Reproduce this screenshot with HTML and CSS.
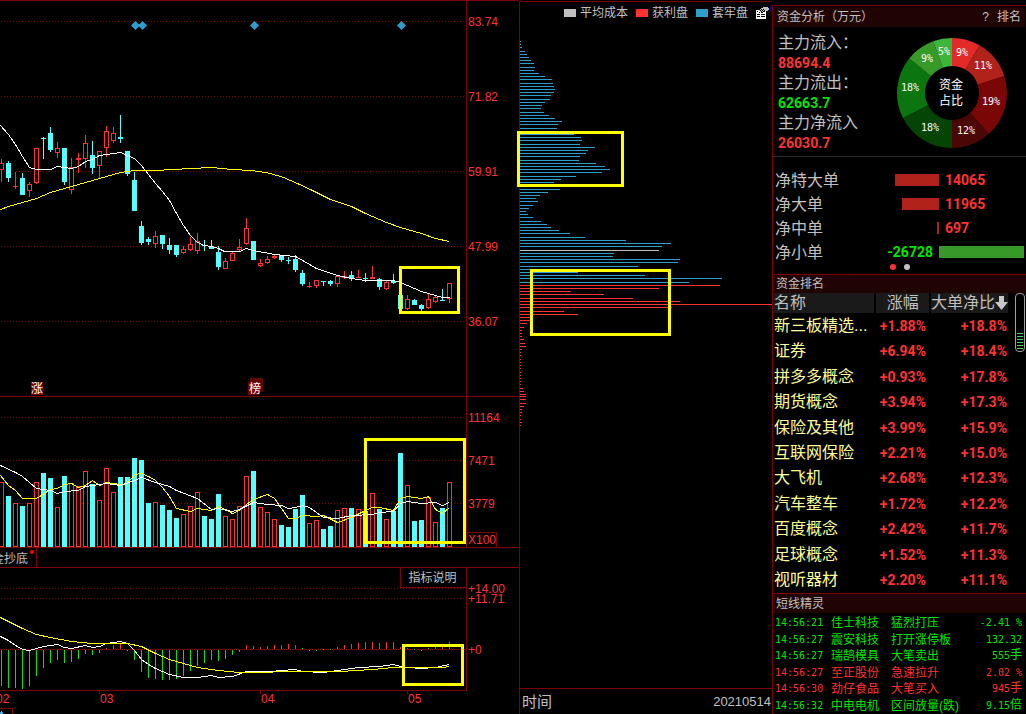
FILE: index.html
```html
<!DOCTYPE html>
<html lang="zh-CN">
<head>
<meta charset="utf-8">
<title>资金分析</title>
<link rel="stylesheet" href="styles.css">
</head>
<body>
<main class="terminal">
  <section class="charts" aria-label="K线图">
    <svg class="chart" id="price" viewBox="0 0 519 397"></svg>
    <svg class="chart" id="volume" viewBox="0 397 519 150"></svg>
    <div class="tabs"><button class="tab" type="button"><span class="tab-text">金抄底</span><i class="tab-dot"></i></button></div>
    <div class="indicator">
      <svg class="chart" id="macd" viewBox="0 568 519 146"></svg>
      <button class="explain" type="button">指标说明</button>
    </div>
  </section>

  <section class="chips" aria-label="筹码分布">
    <div class="legend">
      <span class="key"><i class="swatch swatch-avg"></i>平均成本</span>
      <span class="key"><i class="swatch swatch-win"></i>获利盘</span>
      <span class="key"><i class="swatch swatch-lose"></i>套牢盘</span>
      <button class="settings" type="button" aria-label="设置">
        <svg class="settings-icon" viewBox="0 0 16 14" shape-rendering="crispEdges">
          <path fill="#fff" d="M0 4h10v9H0z"/>
          <path fill="#000" d="M1 8h3v1H1zM5 8h4v1H5zM1 10h3v1H1zM5 10h4v1H5zM1 5h1v1H1zM3 6h1v1H3z"/>
          <path fill="#000" d="M3 5l4-4 3 4-4 2z"/>
          <path fill="#c0c0c0" d="M5 2h2v-1h5v1h1v2h-1v1h-3v-1h-1v-1h-3zM4 3h1v1H4zM6 3h1v1H6zM5 4h1v1H5zM7 4h1v1H7zM6 5h1v1H6zM3 4h1v1H3zM4 5h1v1H4z"/>
          <path fill="#00009c" d="M14 0h2v6h-1v-1h-1z"/>
        </svg>
      </button>
    </div>
    <svg class="chart" id="distribution" viewBox="520 23 252 665"></svg>
    <div class="chips-foot"><span class="foot-label">时间</span><span class="foot-date">20210514</span></div>
  </section>

  <aside class="side">
    <section class="flow">
      <header class="bar">
        <h2 class="bar-title">资金分析（万元）</h2>
        <span class="bar-actions"><button class="link" type="button">?</button><button class="link" type="button">排名</button></span>
      </header>
      <div class="summary">
        <dl class="totals">
          <dt>主力流入：</dt><dd class="up">88694.4</dd>
          <dt>主力流出：</dt><dd class="down">62663.7</dd>
          <dt>主力净流入</dt><dd class="up">26030.7</dd>
        </dl>
        <svg class="donut" id="donut" viewBox="0 0 112 112"></svg>
      </div>
      <div class="orders">
        <div class="order"><span class="order-name">净特大单</span><span class="order-left"><i class="strip strip-up" style="width:44px"></i></span><b class="order-value up">14065</b></div>
        <div class="order"><span class="order-name">净大单</span><span class="order-left"><i class="strip strip-up" style="width:37px"></i></span><b class="order-value up">11965</b></div>
        <div class="order"><span class="order-name">净中单</span><span class="order-left"><i class="strip strip-up" style="width:2px"></i></span><b class="order-value up">697</b></div>
        <div class="order"><span class="order-name">净小单</span><b class="order-left order-negative down">-26728</b><i class="strip strip-down"></i></div>
      </div>
      <div class="pager"><button class="dot dot-on" type="button" aria-label="第1页"></button><button class="dot" type="button" aria-label="第2页"></button></div>
    </section>

    <section class="ranking">
      <header class="bar"><h2 class="bar-title">资金排名</h2></header>
      <div class="rank-body">
        <table class="rank">
          <thead><tr><th class="rank-name">名称</th><th class="rank-change">涨幅</th><th class="rank-ratio">大单净比<svg class="sort" viewBox="0 0 13 14"><path fill="#c8c8c8" d="M4 0h5v6h4L6.500 14 0 6h4z"/></svg></th></tr></thead>
          <tbody id="rank-rows"></tbody>
        </table>
        <div class="scroll"><i class="thumb"></i></div>
      </div>
    </section>

    <section class="alerts">
      <header class="bar"><h2 class="bar-title">短线精灵</h2></header>
      <table class="feed">
        <tbody>
          <tr class="down"><td class="time">14:56:21</td><td>佳士科技</td><td>猛烈打压</td><td class="amount">-2.41 %</td></tr>
          <tr class="down"><td class="time">14:56:27</td><td>震安科技</td><td>打开涨停板</td><td class="amount">132.32</td></tr>
          <tr class="down"><td class="time">14:56:27</td><td>瑞鹄模具</td><td>大笔卖出</td><td class="amount">555<span class="unit">手</span></td></tr>
          <tr class="up"><td class="time">14:56:27</td><td>至正股份</td><td>急速拉升</td><td class="amount">2.02 %</td></tr>
          <tr class="up"><td class="time">14:56:30</td><td>劲仔食品</td><td>大笔买入</td><td class="amount">945<span class="unit">手</span></td></tr>
          <tr class="down"><td class="time">14:56:32</td><td>中电电机</td><td>区间放量(跌)</td><td class="amount">9.15<span class="unit">倍</span></td></tr>
        </tbody>
      </table>
    </section>
  </aside>
</main>
<script src="charts.js"></script>
</body>
</html>
```
FILE: styles.css
```css
* { box-sizing: border-box; }

body {
  margin: 0;
  background: #000;
  color: #c0c0c0;
  font-family: "Liberation Sans", "Noto Sans CJK SC", sans-serif;
  font-size: 12px;
  line-height: 16px;
}

button {
  margin: 0;
  padding: 0;
  border: 0;
  background: none;
  color: inherit;
  font: inherit;
}

h2, dl, dd { margin: 0; }

.up { color: #ff3232; }
.down { color: #00e600; }

.terminal {
  display: grid;
  grid-template-columns: 519fr 253fr 254fr;
  min-height: 100vh;
  overflow: hidden;
}

/* charts */
.charts { min-width: 0; }
.chart {
  display: block;
  width: 100%;
  height: auto;
  overflow: visible;
}
.line { stroke: #800000; fill: none; shape-rendering: crispEdges; }
.grid { stroke: #800000; stroke-dasharray: 1 2; shape-rendering: crispEdges; }
.zero { stroke: #800000; stroke-dasharray: 1 1; shape-rendering: crispEdges; }
.box { stroke: #ffff00; stroke-width: 3; fill: none; shape-rendering: crispEdges; }
.ma { fill: none; stroke-width: 1; shape-rendering: crispEdges; }
.ma-white { stroke: #fff; }
.ma-yellow { stroke: #ffff00; }
.shape { shape-rendering: crispEdges; }
.scale { fill: #ff3232; font-size: 12px; }
.flag { fill: #fff; font-size: 12px; text-anchor: middle; }

.tabs {
  height: 21px;
  border-top: 1px solid #800000;
  border-bottom: 1px solid #800000;
}
.tab {
  position: relative;
  display: flex;
  justify-content: flex-end;
  align-items: center;
  width: 37px;
  height: 19px;
  padding: 2px 8px 0 0;
  border-right: 1px solid #800000;
  overflow: hidden;
}
.tab-text { white-space: nowrap; }
.tab-dot {
  position: absolute;
  top: 2px;
  right: 2px;
  width: 4px;
  height: 4px;
  border-radius: 2px;
  background: #ff0000;
}
.indicator { position: relative; }
.explain {
  position: absolute;
  top: 0;
  right: 52px;
  width: 67px;
  height: 20px;
  padding-right: 2px;
  border: 1px solid #800000;
  border-top: 0;
  background: #000;
}

/* chip distribution */
.chips {
  display: flex;
  flex-direction: column;
  min-width: 0;
  margin-top: 1px;
  border-top: 1px solid #800000;
  border-left: 1px solid #800000;
}
.legend {
  display: flex;
  justify-content: flex-end;
  align-items: center;
  gap: 8px;
  height: 21px;
}
.key { display: flex; align-items: center; gap: 4px; }
.swatch { width: 12px; height: 8px; }
.swatch-avg { background: #c0c0c0; }
.swatch-win { background: #ff3232; }
.swatch-lose { background: #2e9fcc; }
.settings-icon { display: block; width: 16px; height: 14px; }
.chips-foot {
  display: flex;
  flex: 1;
  justify-content: space-between;
  align-items: center;
  padding: 0 1px 0 2px;
  border-top: 1px solid #800000;
}
.foot-label { font-size: 15px; }
.foot-date { font-size: 13px; }

/* side column */
.side {
  display: flex;
  flex-direction: column;
  margin-top: 5px;
  border-top: 1px solid #800000;
  border-left: 1px solid #800000;
  background: #000;
}
.bar {
  display: flex;
  justify-content: space-between;
  align-items: center;
  height: 19px;
  padding: 0 4px 0 3px;
  background: #200404;
}
.bar-title { font-size: 12px; font-weight: 400; }
.bar-actions { display: flex; gap: 8px; }
.flow { border-bottom: 1px solid #800000; }
.flow .bar { height: 20px; margin: 1px 1px 0; }
.summary {
  display: flex;
  justify-content: space-between;
  align-items: center;
  height: 130px;
  padding: 3px 18px 0 5px;
  border-bottom: 1px solid #2a2a2a;
}
.totals { font-size: 16px; line-height: 20px; white-space: nowrap; }
.totals dd { font: 700 14px/20px Roboto, sans-serif; }
.donut { flex: none; width: 112px; height: 112px; }
.donut-label { fill: #fff; font: 10px "DejaVu Sans Mono", monospace; text-anchor: middle; }
.donut-center { fill: #fff; font-size: 12px; text-anchor: middle; }
.orders { padding-top: 11px; }
.order {
  display: grid;
  grid-template-columns: 84px 80px 1fr;
  align-items: center;
  height: 24px;
  padding: 0 2px;
}
.order-name { font-size: 16px; line-height: 16px; padding-top: 1px; }
.order-left { display: flex; justify-content: flex-end; }
.order-value, .order-negative { font: 700 14px/16px Roboto, sans-serif; }
.order-value { padding-left: 6px; }
.order-negative { padding-right: 6px; }
.strip { height: 12px; }
.strip-up { background: #b1221b; }
.strip-down { background: #379928; }
.pager {
  display: flex;
  justify-content: center;
  gap: 8px;
  height: 10px;
}
.dot { width: 6px; height: 6px; border-radius: 3px; background: #c0c0c0; }
.dot-on { background: #ff3232; }

.ranking { display: flex; flex: 1; flex-direction: column; }
.ranking .bar { height: 18px; }
.rank-body { display: flex; flex: 1; justify-content: space-between; padding-right: 1px; }
.rank { width: 237px; border-collapse: collapse; }
.rank th, .rank td { padding: 0; }
.rank th {
  height: 20px;
  background: #1a1a1a;
  border-right: 2px solid #000;
  font-size: 16px;
  font-weight: 400;
  line-height: 20px;
  white-space: nowrap;
}
.rank .rank-name { width: 103px; text-align: left; padding-left: 1px; }
.rank .rank-change { width: 55px; }
.rank .rank-ratio { text-align: left; }
.rank td { text-align: right; font: 700 14px/16px Roboto, sans-serif; color: #ff3232; }
.rank .sector {
  padding-left: 1px;
  text-align: left;
  color: #ffff96;
  font: 400 16px/16px "Liberation Sans", "Noto Sans CJK SC", sans-serif;
  white-space: nowrap;
}
.rank .ratio { padding-right: 2px; }
.rank .change { padding-right: 4px; }
.sort { width: 13px; height: 14px; vertical-align: -2px; }
.scroll {
  display: flex;
  align-items: flex-end;
  width: 10px;
  height: 59px;
  padding: 2px 1px;
  border: 1px solid #a0a0a0;
  border-radius: 4px;
}
.thumb {
  flex: 1;
  height: 16px;
  background: repeating-linear-gradient(#3fd060 0 1px, #000 1px 3px);
}

.alerts { display: flex; flex-direction: column; height: 121px; border-top: 1px solid #800000; }
.feed { flex: 1; width: 250px; margin: 2px 0 0 2px; border-collapse: collapse; }
.feed td { width: 60px; padding: 0; line-height: 16px; white-space: nowrap; }
.feed .time { width: 56px; }
.feed .time, .feed .amount { font-family: "DejaVu Sans Mono", monospace; font-size: 10px; }
.feed .amount { width: auto; padding-right: 3px; text-align: right; }
.unit { font-family: "Noto Sans CJK SC", sans-serif; font-size: 12px; line-height: 12px; }
```
FILE: charts.js
```js
const NS = 'http://www.w3.org/2000/svg';
const RED = '#ff3232';
const CYAN = '#54ffff';
const STEP = 7;

function add(svg, tag, attrs, text) {
  const el = document.createElementNS(NS, tag);
  for (const key in attrs) el.setAttribute(key, attrs[key]);
  if (text) el.textContent = text;
  svg.appendChild(el);
}
const rect = (svg, x, y, w, h, fill) => add(svg, 'rect', { class: 'shape', x, y, width: w, height: h, fill });
const hline = (svg, cls, y, x1, x2) => add(svg, 'path', { class: cls, d: `M${x1} ${y + 0.5}H${x2}` });
const vline = (svg, x, y1, y2) => add(svg, 'path', { class: 'line', d: `M${x + 0.5} ${y1}V${y2}` });
const label = (svg, x, y, text) => add(svg, 'text', { class: 'scale', x, y }, text);
const box = (svg, x1, y1, x2, y2) => add(svg, 'rect', { class: 'box', x: x1 + 1.5, y: y1 + 1.5, width: x2 - x1 - 3, height: y2 - y1 - 3 });
const average = (svg, cls, text) => {
  const points = text.split(' ').map(p => p.split(',').map(n => +n + 0.5).join(',')).join(' ');
  add(svg, 'polyline', { class: 'ma ' + cls, points });
};
const hollow = (svg, x, top, bottom) =>
  add(svg, 'rect', { class: 'shape', x: x - 1.5, y: top + 0.5, width: 4, height: bottom - top - 1, fill: '#000', stroke: RED });

/* price: colour, high, body top, body bottom, low */
const candles = `r159,163,170,182 c161,163,178,182 r172,186,187,189 c173,178,195,195 r182,184,191,197 r148,148,183,184
c137,138,139,159 c127,133,150,152 r142,148,153,158 c148,148,182,185 r158,167,190,194 r153,158,160,173 r135,143,159,168
c141,155,168,174 r151,151,166,178 r126,131,148,157 r127,133,141,143 c115,137,139,143 c151,151,174,176 c172,180,211,211
c221,226,243,245 c237,239,242,245 r231,236,244,248 c235,235,244,249 c238,245,250,254 c245,245,255,257 r246,249,253,254
r237,244,250,251 r233,241,251,254 c240,245,246,251 c240,246,249,249 c246,252,267,270 r258,261,269,269 r251,253,261,261
r239,247,250,251 r218,228,244,245 c241,241,260,260 r259,263,266,267 r256,259,263,264 r255,256,258,259 c255,255,260,262
c257,260,261,264 c255,259,270,272 c270,273,284,286 r282,286,287,288 r280,280,286,288 c281,281,282,286 c280,281,284,286
r275,276,284,287 r271,276,278,279 c271,275,279,281 r270,277,278,278 c273,278,279,282 r266,277,279,279 c278,279,287,290
r281,282,289,290 c274,281,283,284 c295,295,309,309 r295,299,309,310 c299,300,305,305 c304,305,309,311 r294,299,308,309
r296,297,302,303 c289,300,301,301 r283,283,299,303`.split(/\s+/);

const price = document.getElementById('price');
hline(price, 'line', 0, 0, 519);
hline(price, 'line', 396, 0, 519);
vline(price, 466, 0, 397);
[['83.74', 21], ['71.82', 96], ['59.91', 171], ['47.99', 246], ['36.07', 321]].forEach(([text, y]) => {
  hline(price, 'grid', y, 1, 466);
  label(price, 468, y + 5, text);
});
candles.forEach((entry, i) => {
  const [high, top, bottom, low] = entry.slice(1).split(',').map(Number);
  const x = 1 + i * STEP;
  const color = entry[0] === 'r' ? RED : CYAN;
  if (high < top) rect(price, x, high, 1, top - high, color);
  if (low > bottom) rect(price, x, bottom, 1, low - bottom, color);
  if (entry[0] === 'r' && bottom - top > 2) hollow(price, x, top, bottom);
  else rect(price, x - 2, top, 5, bottom - top, color);
});
average(price, 'ma-yellow', '0,209 8,206 22,202 36,198 50,192 71,186 92,180 113,174 120,172 134,170 155,170 190,168 211,167 232,169 250,170 259,171 270,173 283,177 297,183 312,190 330,199 351,206 365,213 379,219 386,222 400,227 421,233 435,238 449,241');
average(price, 'ma-white', '0,125 8,134 15,144 22,156 29,167 36,169 50,169 57,166 71,168 78,166 85,161 92,159 99,155 106,154 120,152 127,155 134,158 141,165 148,174 155,183 162,191 169,200 176,213 183,225 190,235 197,242 204,245 211,246 218,248 224,251 239,251 246,248 253,250 274,254 295,256 302,260 309,264 316,268 337,275 351,278 365,280 379,280 393,280 400,282 407,285 421,291 435,295 442,297 449,297');
rect(price, 136, 24, 6, 2, '#2e9fcc');
[135, 142, 254, 401].forEach(x => add(price, 'path', { fill: '#2e9fcc', d: `M${x + 0.5} 21l4.500 4.500-4.500 4.500-4.500-4.500z` }));
rect(price, 31, 382, 12, 13, '#780000');
rect(price, 250, 378, 13, 14, '#600606');
rect(price, 248, 382, 12, 13, '#780000');
add(price, 'text', { class: 'flag', x: 37, y: 393 }, '涨');
add(price, 'text', { class: 'flag', x: 255, y: 393 }, '榜');
box(price, 399, 266, 460, 314);

/* volume */
const volumes = `r482 c496 r503 c506 r503 r482 c473 c478 r507 c476 r483 r486 r471 c484 r500 r468 r492 c477 c477 c458 c460 c503 r502
c505 c510 c518 r514 r506 r492 c516 c519 c494 r516 r519 r506 r476 c471 r507 r512 r519 c525 c527 c509 c495 r523 r520 c529 c526 r510
r508 c508 r509 c511 r493 c509 r519 c511 c453 r485 c521 c520 r497 r522 c508 r482`.split(/\s+/);
const volume = document.getElementById('volume');
vline(volume, 466, 397, 547);
[['11164', 417], ['7471', 460], ['3779', 503]].forEach(([text, y]) => {
  hline(volume, 'grid', y, 1, 466);
  label(volume, 468, y + 5, text);
});
add(volume, 'rect', { class: 'line', x: 466.5, y: 532.5, width: 30, height: 15 });
label(volume, 468, 544, 'X100');
volumes.forEach((entry, i) => {
  const x = 1 + i * STEP;
  const top = +entry.slice(1);
  if (entry[0] === 'r') hollow(volume, x, top, 547);
  else rect(volume, x - 2, top, 5, 547 - top, CYAN);
});
average(volume, 'ma-yellow', '0,475 8,485 15,490 22,498 36,498 50,489 57,488 64,484 71,483 78,487 85,485 92,480 99,485 106,482 120,484 127,483 134,474 141,473 148,476 155,480 162,487 169,496 176,508 190,511 197,508 211,510 218,506 225,509 232,513 239,510 246,504 253,499 267,494 274,498 281,508 288,518 295,518 302,515 316,516 323,515 337,522 351,517 365,510 372,507 379,507 393,510 400,498 407,496 421,498 428,496 435,509 442,513 449,507');
average(volume, 'ma-white', '0,465 15,472 22,476 36,488 50,490 57,493 64,491 78,490 85,486 106,483 120,485 134,480 141,477 155,482 169,486 176,490 197,498 211,509 218,508 232,511 239,509 253,502 267,504 281,505 288,508 295,507 302,505 309,507 323,517 337,518 351,515 372,514 379,512 393,511 400,503 407,501 421,503 435,502 442,505 449,502');
box(volume, 364, 438, 466, 544);

/* histogram ends; negative entries are single green points */
const bars = [686, 688, 688, 689, 686, 676, 668, 663, 660, 663, 662, 659, 654, 655, 653, 648, 645, 643, 651, 660, 672, 678, 679, 680,
  680, 679, 676, 671, 666, 663, 660, 661, 659, 655, 652, 645, 646, 647, 646, 645, 645, 644, 645, -648, -650, -650, -649, -649, 647, 645,
  644, 643, 642, 642, 643, 642, 642, 647, 648, -649, -650, -648, 647, 647, 642];
const macd = document.getElementById('macd');
vline(macd, 466, 568, 690);
hline(macd, 'line', 690, 0, 467);
[['+14.00', 588], ['+11.71', 598]].forEach(([text, y]) => {
  hline(macd, 'grid', y, 1, 466);
  label(macd, 468, y + 5, text);
});
hline(macd, 'zero', 649, 0, 466);
label(macd, 468, 654, '+0');
bars.forEach((end, i) => {
  const x = 1 + i * STEP;
  if (end < 0) rect(macd, x, -end, 1, 1, '#00e600');
  else if (end > 650) rect(macd, x, 650, 1, end - 650, '#00e600');
  else rect(macd, x, end, 1, 649 - end, RED);
});
average(macd, 'ma-white', '0,636 8,640 15,645 22,649 29,650 36,648 43,646 57,644 64,647 71,648 85,645 92,647 99,646 106,643 120,641 127,643 134,650 141,659 148,664 155,668 169,674 183,677 197,677 211,675 218,677 232,676 246,671 270,671 281,670 295,669 302,671 323,672 337,670 358,667 379,666 393,664 400,666 407,667 421,668 435,667 449,664');
average(macd, 'ma-yellow', '0,617 8,621 22,628 36,634 50,637 71,641 92,643 127,643 141,646 155,653 169,659 183,663 197,667 218,670 239,672 270,672 275,671 340,671 372,669 393,667 442,667 449,666');
[99, 260, 407].forEach(x => vline(macd, x, 691, 694));
label(macd, -4, 703, '02');
label(macd, 100, 703, '03');
label(macd, 261, 703, '04');
label(macd, 408, 703, '05');
add(macd, 'path', { class: 'line', d: 'M0 708.500H12.500V714' });
rect(macd, 0, 712, 1, 2, '#2e9fcc');
rect(macd, 1, 711, 1, 3, '#d8a050');
rect(macd, 2, 712, 1, 2, '#2e9fcc');
box(macd, 402, 644, 464, 686);

/* chips: y, length */
const lose = '41:1 44:1 47:2 51:5 54:7 57:9 60:11 63:14 67:15 70:14 73:19 76:25 79:32 83:33 86:34 89:35 92:34 95:31 99:30 102:25 105:22 108:21 112:24 115:29 118:35 121:42 124:38 128:37 134:54 137:61 140:62 144:60 147:75 150:68 153:66 156:60 160:59 163:76 166:85 169:90 172:82 176:56 179:41 182:34 189:40 192:28 195:20 198:16 201:18 205:13 208:9 211:6 214:8 217:13 221:21 224:27 227:31 230:39 233:50 237:65 240:106 243:151 246:142 253:94 256:93 259:160 262:158 266:118 269:12 272:58 275:125 278:202 282:169';
const win = '285:200 288:139 291:51 294:84 298:113 301:160 304:252 307:152 311:44 314:58 317:12 320:12 323:7 327:4 330:2 333:2 336:2 339:4 343:5 346:6 349:2 352:1 355:1 359:1 362:1 365:1 368:1 372:1 375:1 378:1 381:1 384:1 388:3 391:4 394:6 396:6 399:6 403:6 406:4 409:2 412:2 415:1 419:1 422:2 425:1';
const distribution = document.getElementById('distribution');
[[lose, '#2e9fcc'], ['250:139', '#c0c0c0'], [win, RED]].forEach(([list, color]) => {
  list.split(' ').forEach(item => {
    const [y, length] = item.split(':').map(Number);
    rect(distribution, 520, y, length, 1, color);
  });
});
box(distribution, 517, 131, 624, 187);
box(distribution, 530, 269, 671, 336);

/* donut: end angle, colour, label, label centre */
const donut = document.getElementById('donut');
let from = 0;
[[30, '#e22b28', '9%', 66, 15], [72, '#b1221b', '11%', 87, 28], [138, '#7b0606', '19%', 95, 64], [180, '#4b0606', '12%', 70, 93],
  [243, '#044404', '18%', 34, 90], [309, '#0b760f', '18%', 14, 50], [340, '#379928', '9%', 31, 21], [360, '#3db53a', '5%', 48, 14]
].forEach(([to, color, text, x, y]) => {
  const at = (r, deg) => `${56 + r * Math.sin(deg * Math.PI / 180)} ${56 - r * Math.cos(deg * Math.PI / 180)}`;
  add(donut, 'path', { fill: color, d: `M${at(55, from)}A55 55 0 0 1 ${at(55, to)}L${at(27, to)}A27 27 0 0 0 ${at(27, from)}z` });
  add(donut, 'text', { class: 'donut-label', x, y: y + 4 }, text);
  from = to;
});
add(donut, 'text', { class: 'donut-center', x: 55, y: 52 }, '资金');
add(donut, 'text', { class: 'donut-center', x: 55, y: 68 }, '占比');

/* ranking rows */
document.getElementById('rank-rows').innerHTML = [
  ['新三板精选...', '+1.88%', '+18.8%'], ['证券', '+6.94%', '+18.4%'], ['拼多多概念', '+0.93%', '+17.8%'],
  ['期货概念', '+3.94%', '+17.3%'], ['保险及其他', '+3.99%', '+15.9%'], ['互联网保险', '+2.21%', '+15.0%'],
  ['大飞机', '+2.68%', '+12.3%'], ['汽车整车', '+1.72%', '+12.2%'], ['百度概念', '+2.42%', '+11.7%'],
  ['足球概念', '+1.52%', '+11.3%'], ['视听器材', '+2.20%', '+11.1%']
].map(([name, change, ratio]) => `<tr><td class="sector">${name}</td><td class="change">${change}</td><td class="ratio">${ratio}</td></tr>`).join('');
```
